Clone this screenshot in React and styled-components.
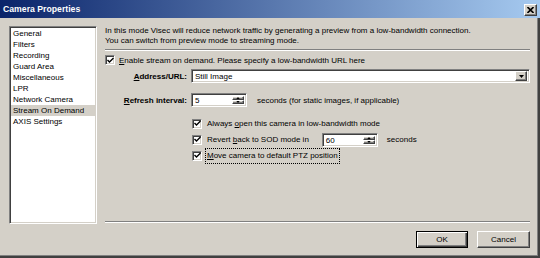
import React from 'react';
import styled, { createGlobalStyle, css } from 'styled-components';

const GlobalStyle = createGlobalStyle`
  html, body {
    margin: 0;
    padding: 0;
    background: #d4d0c8;
  }
  body {
    font-family: 'Liberation Sans', Arial, sans-serif;
    font-size: 8px;
    color: #000;
  }
`;

const sunken = css`
  border-style: solid;
  border-width: 1px;
  border-color: #808080 #ffffff #ffffff #808080;
  box-shadow: inset 1px 1px 0 #404040, inset -1px -1px 0 #d4d0c8;
`;

const raised = css`
  background: #d4d0c8;
  border-style: solid;
  border-width: 1px;
  border-color: #ffffff #404040 #404040 #ffffff;
  box-shadow: inset -1px -1px 0 #808080, inset 1px 1px 0 #d4d0c8;
`;

const Window = styled.div`
  width: 540px;
  height: 258px;
  box-sizing: border-box;
  display: flex;
  flex-direction: column;
  background: #d4d0c8;
  overflow: hidden;
`;

const TitleBar = styled.div`
  height: 18px;
  flex-shrink: 0;
  display: flex;
  align-items: center;
  justify-content: space-between;
  padding: 0 3px 0 3px;
  background: linear-gradient(to right, #0a246a, #a6caf0);
`;

const Title = styled.span`
  color: #fff;
  font-weight: bold;
  font-size: 8.7px;
`;

const CloseButton = styled.div`
  ${raised};
  width: 13px;
  height: 12px;
  box-sizing: border-box;
  display: flex;
  align-items: center;
  justify-content: center;
  margin-top: 2px;
`;

const Body = styled.div`
  flex: 1;
  display: flex;
  flex-direction: column;
  border-right: 2px solid #404040;
  border-bottom: 2px solid #404040;
  box-shadow: inset -1px -1px 0 #808080;
`;

const Content = styled.div`
  display: flex;
  padding: 8px 0 0 9px;
  box-sizing: border-box;
  height: 206px;
`;

const ListBox = styled.div`
  ${sunken};
  width: 88px;
  box-sizing: border-box;
  background: #fff;
  padding: 1px 1px 0 1px;
  display: flex;
  flex-direction: column;
`;

const ListItem = styled.div`
  height: 11px;
  line-height: 11px;
  padding-left: 2px;
  white-space: nowrap;
  background: ${(p) => (p.$selected ? '#d4d0c8' : 'transparent')};
`;

const Main = styled.div`
  flex: 1;
  display: flex;
  flex-direction: column;
  padding: 0 8px 0 8px;
`;

const Intro = styled.p`
  margin: 0;
  line-height: 10px;
`;

const Separator = styled.div`
  height: 0;
  border-top: 1px solid #808080;
  border-bottom: 1px solid #ffffff;
  margin: ${(p) => p.$margin || '0'};
`;

const CheckRow = styled.label`
  display: flex;
  align-items: center;
  gap: 4px;
  height: ${(p) => p.$h || 15}px;
  margin-top: ${(p) => p.$top || 0}px;
  white-space: nowrap;
`;

const Box = styled.span`
  ${sunken};
  width: 10px;
  height: 10px;
  box-sizing: border-box;
  background: #fff;
  display: inline-flex;
  align-items: center;
  justify-content: center;
  flex-shrink: 0;
`;

const CheckText = styled.span`
  padding: 1px 1px;
  outline: ${(p) => (p.$focused ? '1px dotted #000' : 'none')};
  outline-offset: 0;
  line-height: 12px;
`;

const FieldRow = styled.div`
  display: flex;
  align-items: center;
  margin-top: ${(p) => p.$top}px;
`;

const Label = styled.span`
  width: 82px;
  text-align: right;
  font-weight: bold;
  padding-right: 4px;
  white-space: nowrap;
`;

const Combo = styled.div`
  ${sunken};
  flex: 1;
  height: 14px;
  box-sizing: border-box;
  background: #fff;
  display: flex;
  align-items: center;
  justify-content: space-between;
  padding: 0 2px 0 3px;
`;

const ArrowButton = styled.div`
  ${raised};
  width: 12px;
  height: 10px;
  box-sizing: border-box;
  display: flex;
  align-items: center;
  justify-content: center;
`;

const Spin = styled.div`
  ${sunken};
  width: 56px;
  height: 14px;
  box-sizing: border-box;
  background: #fff;
  display: flex;
  align-items: stretch;
  justify-content: space-between;
  padding: 2px 2px 2px 3px;
  margin-right: ${(p) => p.$after || 0}px;
  margin-left: ${(p) => p.$before || 0}px;
`;

const SpinValue = styled.span`
  line-height: 10px;
`;

const SpinButtons = styled.div`
  width: 12px;
  display: flex;
  flex-direction: column;
`;

const SpinHalf = styled.div`
  ${raised};
  flex: 1;
  box-sizing: border-box;
  display: flex;
  align-items: center;
  justify-content: center;
`;

const Options = styled.div`
  display: flex;
  flex-direction: column;
  gap: 1px;
  margin: 9px 0 0 87px;
`;

const Spacer = styled.div`
  flex: 1;
`;

const Footer = styled.div`
  display: flex;
  justify-content: flex-end;
  gap: 9px;
  padding: 7px 8px 0 0;
`;

const Button = styled.div`
  ${raised};
  width: ${(p) => p.$w}px;
  height: 17px;
  box-sizing: border-box;
  display: flex;
  align-items: center;
  justify-content: center;
  ${(p) =>
    p.$default &&
    css`
      border-color: #000;
      box-shadow: inset 1px 1px 0 #fff, inset -1px -1px 0 #404040,
        inset -2px -2px 0 #808080;
    `}
`;

const Check = () => (
  <svg width="7" height="7" viewBox="0 0 7 7">
    <path d="M0.5 3 L2.5 5 L6.5 1" fill="none" stroke="#000" strokeWidth="1.4" />
  </svg>
);

const Tri = ({ down, small }) => (
  <svg width={small ? 4 : 5} height={small ? 2 : 3} viewBox="0 0 5 3">
    <path d={down ? 'M0 0 H5 L2.5 3 Z' : 'M0 3 H5 L2.5 0 Z'} fill="#000" />
  </svg>
);

const SpinBox = ({ value, before, after }) => (
  <Spin $before={before} $after={after}>
    <SpinValue>{value}</SpinValue>
    <SpinButtons>
      <SpinHalf>
        <Tri small />
      </SpinHalf>
      <SpinHalf>
        <Tri small down />
      </SpinHalf>
    </SpinButtons>
  </Spin>
);

const pages = [
  'General',
  'Filters',
  'Recording',
  'Guard Area',
  'Miscellaneous',
  'LPR',
  'Network Camera',
  'Stream On Demand',
  'AXIS Settings',
];

export default function App() {
  return (
    <>
      <GlobalStyle />
      <Window>
        <TitleBar>
          <Title>Camera Properties</Title>
          <CloseButton>
            <svg width="7" height="6" viewBox="0 0 7 6">
              <path d="M0.5 0 L6.5 6 M6.5 0 L0.5 6" stroke="#000" strokeWidth="1.6" />
            </svg>
          </CloseButton>
        </TitleBar>
        <Body>
          <Content>
            <ListBox>
              {pages.map((p) => (
                <ListItem key={p} $selected={p === 'Stream On Demand'}>
                  {p}
                </ListItem>
              ))}
            </ListBox>
            <Main>
              <Intro>
                In this mode Visec will reduce network traffic by generating a preview from a
                low-bandwidth connection.
                <br />
                You can switch from preview mode to streaming mode.
              </Intro>
              <Separator $margin="3px 0 0 0" />
              <CheckRow $h={12} $top={3}>
                <Box>
                  <Check />
                </Box>
                <span>
                  <u>E</u>nable stream on demand. Please specify a low-bandwidth URL here
                </span>
              </CheckRow>
              <FieldRow $top={3}>
                <Label>
                  <u>A</u>ddress/URL:
                </Label>
                <Combo>
                  <span>Still Image</span>
                  <ArrowButton>
                    <Tri down />
                  </ArrowButton>
                </Combo>
              </FieldRow>
              <FieldRow $top={10}>
                <Label>
                  <u>R</u>efresh interval:
                </Label>
                <SpinBox value="5" after={10} before={0} />
                <span>seconds (for static images, if applicable)</span>
              </FieldRow>
              <Options>
                <CheckRow>
                  <Box>
                    <Check />
                  </Box>
                  <CheckText>
                    Always <u>o</u>pen this camera in low-bandwidth mode
                  </CheckText>
                </CheckRow>
                <CheckRow>
                  <Box>
                    <Check />
                  </Box>
                  <CheckText>
                    Revert <u>b</u>ack to SOD mode in
                  </CheckText>
                  <SpinBox value="60" before={8} after={5} />
                  <span>seconds</span>
                </CheckRow>
                <CheckRow>
                  <Box>
                    <Check />
                  </Box>
                  <CheckText $focused>
                    <u>M</u>ove camera to default PTZ position
                  </CheckText>
                </CheckRow>
              </Options>
              <Spacer />
              <Separator $margin="0 0 1px 0" />
            </Main>
          </Content>
          <Footer>
            <Button $default $w={52}>
              OK
            </Button>
            <Button $w={53}>Cancel</Button>
          </Footer>
        </Body>
      </Window>
    </>
  );
}
